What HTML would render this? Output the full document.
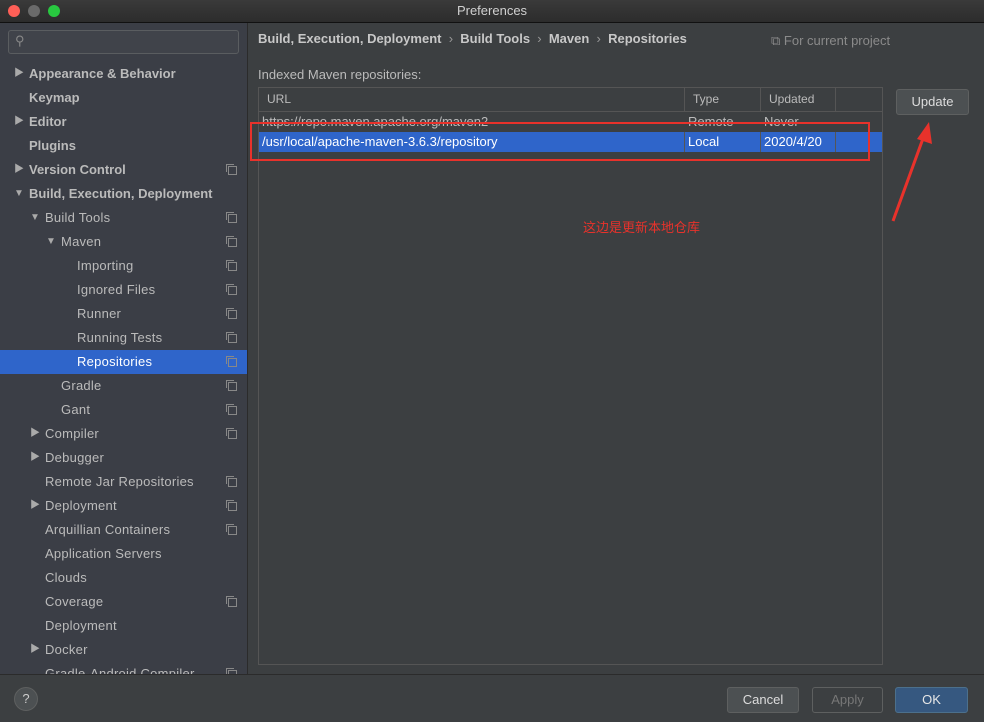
<!DOCTYPE html><html><head><meta charset="utf-8"><style>
body{margin:0;width:984px;height:722px;overflow:hidden;background:#3c3f41;font-family:"Liberation Sans","Noto Sans CJK SC",sans-serif;font-size:13px;color:#bbbbbb;position:relative}
.a{position:absolute}
#title{left:0;top:0;width:984px;height:22px;background:linear-gradient(#3a3a3a,#2c2c2c);border-bottom:1px solid #111;text-align:center;line-height:22px;color:#d0d0d0;font-size:13px}
.dot{top:5px;width:12px;height:12px;border-radius:50%}
#side{left:0;top:23px;width:247px;height:651px;background:#3b3e46;border-right:1px solid #2b2b2b;overflow:hidden}
.row{position:absolute;left:0;width:247px;height:24px;line-height:24px;font-weight:bold;color:#bbb}
.row.sel{background:#2f65ca;color:#fff}
.arr{position:absolute;font-size:10px;color:#aaa}
.ic{position:absolute;left:228px;top:8px;width:7px;height:7px;border:1px solid #888;}
.ic:after{content:"";position:absolute;left:-3px;top:-3px;width:7px;height:7px;border-left:1px solid #888;border-top:1px solid #888}
.btn{height:24px;line-height:24px;text-align:center;border-radius:3px;border:1px solid #5e6060;background:#4c5052;color:#ddd}
</style></head><body>
<div id="title" class="a">Preferences</div>
<div class="a dot" style="left:8px;background:#fe5f57"></div>
<div class="a dot" style="left:28px;background:#6a6a6a"></div>
<div class="a dot" style="left:48px;background:#28c840"></div>
<div id="side" class="a">
<div class="a" style="left:8px;top:7px;width:229px;height:22px;border:1px solid #5a5d60;border-radius:3px;background:#40434a"><span style="position:absolute;left:6px;top:2px;color:#888;font-size:13px">⚲</span></div>
<div id="tree"></div>
</div>
<div class="a" style="left:258px;top:31px;font-weight:bold;color:#c8c8c8;font-size:13px;white-space:nowrap">Build, Execution, Deployment <span style="font-weight:normal;color:#999">&nbsp;›&nbsp;</span> Build Tools <span style="font-weight:normal;color:#999">&nbsp;›&nbsp;</span> Maven <span style="font-weight:normal;color:#999">&nbsp;›&nbsp;</span> Repositories</div>
<div class="a" style="left:771px;top:33px;color:#8a8a8a">⧉ For current project</div>
<div class="a" style="left:258px;top:67px">Indexed Maven repositories:</div>
<div class="a" style="left:258px;top:87px;width:623px;height:576px;border:1px solid #555;background:#3c3f41">
<div class="a" style="left:0;top:0;width:623px;height:23px;border-bottom:1px solid #555;font-size:12px;line-height:23px">
<span class="a" style="left:8px">URL</span><span class="a" style="left:434px">Type</span><span class="a" style="left:510px">Updated</span>
<div class="a" style="left:425px;top:0;width:1px;height:23px;background:#555"></div>
<div class="a" style="left:501px;top:0;width:1px;height:23px;background:#555"></div>
<div class="a" style="left:576px;top:0;width:1px;height:23px;background:#555"></div></div>
<div class="a" style="left:0;top:24px;width:623px;height:20px;line-height:20px;color:#bbb"><span class="a" style="left:3px">https://repo.maven.apache.org/maven2</span><span class="a" style="left:429px">Remote</span><span class="a" style="left:505px">Never</span></div>
<div class="a" style="left:0;top:44px;width:623px;height:20px;line-height:20px;background:#2f65ca;color:#fff"><span class="a" style="left:3px">/usr/local/apache-maven-3.6.3/repository</span><span class="a" style="left:429px">Local</span><span class="a" style="left:505px">2020/4/20</span>
<div class="a" style="left:425px;top:0;width:1px;height:20px;background:#555"></div><div class="a" style="left:501px;top:0;width:1px;height:20px;background:#555"></div><div class="a" style="left:576px;top:0;width:1px;height:20px;background:#555"></div></div>
</div>
<div class="a" style="left:250px;top:122px;width:616px;height:35px;border:2px solid #e8322b"></div>
<div class="a btn" style="left:896px;top:89px;width:71px">Update</div>
<div class="a" style="left:583px;top:217px;color:#e8322b;font-size:13px">这边是更新本地仓库</div>
<svg class="a" style="left:885px;top:118px" width="50" height="110"><line x1="8" y1="103" x2="40" y2="15" stroke="#e8322b" stroke-width="3"/><polygon points="44,4 47,26 32,21" fill="#e8322b"/></svg>
<div class="a" style="left:0;top:674px;width:984px;height:1px;background:#2b2b2b"></div>
<div class="a" style="left:14px;top:687px;width:22px;height:22px;border-radius:50%;background:#4c5052;border:1px solid #5e6060;text-align:center;line-height:22px;color:#ccc">?</div>
<div class="a btn" style="left:727px;top:687px;width:70px">Cancel</div>
<div class="a btn" style="left:812px;top:687px;width:69px;background:#3c3f41;color:#777">Apply</div>
<div class="a btn" style="left:895px;top:687px;width:71px;background:#365880;border-color:#4c708c;color:#e6e6e6">OK</div>
<script>
var items=[["Appearance & Behavior",0,"r",0],["Keymap",0,"",0],["Editor",0,"r",0],["Plugins",0,"",0],["Version Control",0,"r",1],["Build, Execution, Deployment",0,"d",0],["Build Tools",1,"d",1],["Maven",2,"d",1],["Importing",3,"",1],["Ignored Files",3,"",1],["Runner",3,"",1],["Running Tests",3,"",1],["Repositories",3,"",1,1],["Gradle",2,"",1],["Gant",2,"",1],["Compiler",1,"r",1],["Debugger",1,"r",0],["Remote Jar Repositories",1,"",1],["Deployment",1,"r",1],["Arquillian Containers",1,"",1],["Application Servers",1,"",0],["Clouds",1,"",0],["Coverage",1,"",1],["Deployment",1,"",0],["Docker",1,"r",0],["Gradle-Android Compiler",1,"",1]];
var h="";items.forEach(function(it,i){var x=[29,45,61,77][it[1]];h+='<div class="row'+(it[4]?' sel':'')+'" style="top:'+(39+i*24)+'px"><span style="position:absolute;left:'+x+'px'+(it[1]>0?';font-weight:normal;letter-spacing:0.25px':'')+'">'+it[0].replace("&","&amp;")+'</span>'+(it[2]?'<span class="arr" style="left:'+(x-15)+'px">'+(it[2]=="r"?"▶":"▼")+'</span>':'')+(it[3]?'<span class="ic"></span>':'')+'</div>';});
document.getElementById("tree").innerHTML=h;
</script>
</body></html>
